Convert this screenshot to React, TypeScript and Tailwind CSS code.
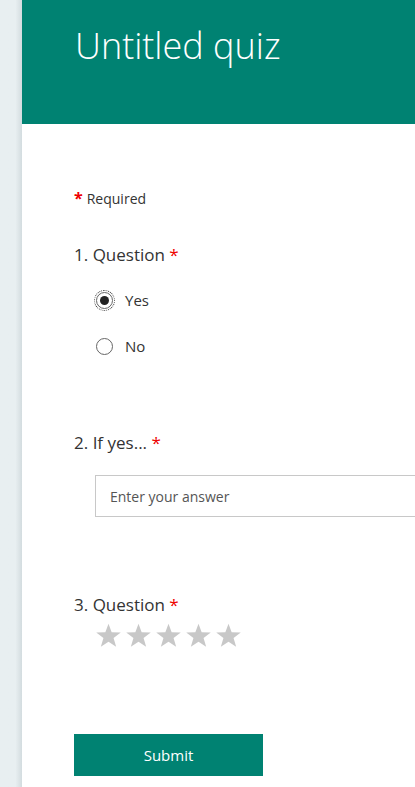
function Radio({ checked, label }: { checked?: boolean; label: string }) {
  return (
    <label className="flex h-[46px] items-center gap-[12px]">
      <span
        className={`flex h-[17px] w-[17px] items-center justify-center rounded-full border border-[#666] bg-white ${
          checked ? "outline outline-1 outline-dotted outline-offset-1 outline-[#333]" : ""
        }`}
      >
        {checked && <span className="h-[9px] w-[9px] rounded-full bg-[#222]" />}
      </span>
      <span className="text-[15px] text-[#333]">{label}</span>
    </label>
  );
}

function Title({ n, text }: { n: number; text: string }) {
  return (
    <div className="text-[17px] leading-6 text-[#333]">
      {n}. {text} <span className="text-[#e00]">*</span>
    </div>
  );
}

function StarIcon() {
  return (
    <svg viewBox="0 0 24 24" className="h-[27px] w-[27px]">
      <polygon
        points="12,1.5 14.8,9.1 22.9,9.3 16.5,14.3 18.8,22.1 12,17.5 5.2,22.1 7.5,14.3 1.1,9.3 9.2,9.1"
        fill="#c8c8c8"
      />
    </svg>
  );
}

export default function App() {
  return (
    <div
      className="flex h-[787px] w-[415px] overflow-hidden bg-[#e8eff1]"
      style={{ fontFamily: "'Open Sans', 'Noto Sans', sans-serif" }}
    >
      <div className="w-[22px] shrink-0 bg-gradient-to-r from-[#e8eff1] from-70% to-[#d3dcdf]" />
      <div className="w-[520px] shrink-0 bg-white">
        <header className="h-[124px] bg-[#008272] pl-[53px] pt-[23px]">
          <h1 className="text-[36px] font-light leading-[46px] text-white">Untitled quiz</h1>
        </header>

        <div className="pl-[52px] pt-[62px]">
          <div className="text-[14px] text-[#333]">
            <span className="mr-1 text-[16px] font-bold text-[#e00]">*</span>Required
          </div>

          <div className="mt-[33px]">
            <Title n={1} text="Question" />
            <div className="pl-[22px] pt-[10px]">
              <Radio checked label="Yes" />
              <Radio label="No" />
            </div>
          </div>

          <div className="mt-[62px]">
            <Title n={2} text="If yes..." />
            <div className="pl-[21px] pt-[20px]">
              <input
                className="h-[42px] w-[420px] border border-[#c8c8c8] px-[14px] text-[14px] text-[#333] placeholder:text-[#555] outline-none"
                placeholder="Enter your answer"
              />
            </div>
          </div>

          <div className="mt-[76px]">
            <Title n={3} text="Question" />
            <div className="flex gap-[3px] pl-[21px] pt-[5px]">
              {[0, 1, 2, 3, 4].map((i) => (
                <StarIcon key={i} />
              ))}
            </div>
          </div>

          <button className="mt-[85px] h-[42px] w-[189px] bg-[#008272] text-[15px] text-white">
            Submit
          </button>
        </div>
      </div>
    </div>
  );
}
